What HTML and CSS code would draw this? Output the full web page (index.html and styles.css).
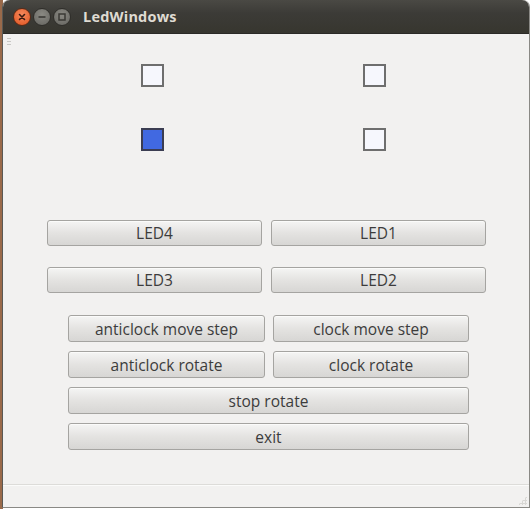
FILE: index.html
```html
<!DOCTYPE html>
<html>
<head>
<meta charset="utf-8">
<link rel="stylesheet" href="styles.css">
</head>
<body>
<div class="desk">
  <div class="window">
    <div class="titlebar">
      <div class="controls">
        <span class="wbtn close"><svg width="10" height="10" viewBox="0 0 10 10"><path d="M2.5 2.5 L7.5 7.5 M7.5 2.5 L2.5 7.5" stroke="#3a1a10" stroke-width="1.6" stroke-linecap="round"/></svg></span>
        <span class="wbtn"><svg width="10" height="10" viewBox="0 0 10 10"><path d="M1.5 5 H8.5" stroke="#3a3935" stroke-width="1.6"/></svg></span>
        <span class="wbtn"><svg width="10" height="10" viewBox="0 0 10 10"><rect x="2" y="2" width="6" height="6" fill="none" stroke="#3a3935" stroke-width="1.5"/></svg></span>
      </div>
      <div class="title">LedWindows</div>
    </div>
    <div class="content">
      <div class="menu-grip"></div>
      <div class="leds">
        <span class="led"></span><span class="led"></span>
        <span class="led on"></span><span class="led"></span>
      </div>
      <div class="grid1">
        <button class="btn">LED4</button>
        <button class="btn">LED1</button>
        <button class="btn">LED3</button>
        <button class="btn">LED2</button>
      </div>
      <div class="grid2">
        <button class="btn b2">anticlock move step</button>
        <button class="btn b2">clock move step</button>
        <button class="btn b2">anticlock rotate</button>
        <button class="btn b2">clock rotate</button>
        <button class="btn b2 wide">stop rotate</button>
        <button class="btn b2 wide">exit</button>
      </div>
    </div>
    <div class="status"><span class="grip"></span></div>
  </div>
</div>
</body>
</html>
```

FILE: styles.css
```css
html, body {
  margin: 0;
  padding: 0;
  width: 531px;
  height: 509px;
  overflow: hidden;
  background: #ffffff;
}
.desk {
  width: 531px;
  height: 509px;
  background: linear-gradient(90deg, #9a6a4a 0, #9a6a4a 3px, #ffffff 3px);
}
.window {
  margin-left: 2px;
  width: 526px;
  height: 507px;
  display: flex;
  flex-direction: column;
  background: #f2f1f0;
  border-right: 1px solid #8a8985;
  border-left: 1px solid #5a5955;
  border-bottom: 1px solid #8a8985;
  border-radius: 7px 7px 0 0;
  font-family: "Open Sans", "DejaVu Sans", sans-serif;
}
.titlebar {
  height: 34px;
  flex: none;
  display: flex;
  align-items: center;
  background: linear-gradient(#4a4944, #3c3b37 40%, #37362f);
  border-radius: 7px 7px 0 0;
  border-bottom: 1px solid #2b2a27;
  box-sizing: border-box;
}
.controls {
  display: flex;
  gap: 2px;
  margin-left: 10px;
}
.wbtn {
  width: 18px;
  height: 18px;
  border-radius: 50%;
  background: radial-gradient(circle at 50% 35%, #8a8983, #65645f);
  border: 1px solid #2f2e2a;
  display: flex;
  align-items: center;
  justify-content: center;
  box-sizing: border-box;
}
.wbtn.close {
  background: radial-gradient(circle at 50% 35%, #f58a5e, #e0531f);
  border-color: #5b2a16;
}
.title {
  margin-left: 12px;
  color: #dfdbd2;
  font-weight: bold;
  font-size: 14.5px;
  letter-spacing: 0.2px;
}
.content {
  flex: 1;
  position: relative;
  box-sizing: border-box;
  padding-top: 30px;
}
.menu-grip {
  position: absolute;
  left: 4px;
  top: 4px;
  width: 4px;
  height: 8px;
  background: repeating-linear-gradient(#c9c8c5 0 1px, transparent 1px 3px);
}
.leds {
  display: grid;
  grid-template-columns: 23px 23px;
  column-gap: 199px;
  row-gap: 41px;
  margin-left: 138px;
}
.led {
  width: 23px;
  height: 23px;
  box-sizing: border-box;
  border: 2px solid #6e6e6e;
  background: #f6f7fd;
}
.led.on {
  background: #4169e1;
  border-color: #3b3d52;
}
.grid1 {
  display: grid;
  grid-template-columns: 215px 215px;
  column-gap: 9px;
  row-gap: 21px;
  margin-left: 44px;
  margin-top: 69px;
}
.btn {
  height: 26px;
  box-sizing: border-box;
  border: 1px solid #a5a4a1;
  border-radius: 3px;
  background: linear-gradient(#f5f5f4, #e4e3e1 50%, #d7d6d4);
  box-shadow: inset 0 1px 0 #fbfbfa;
  font-family: "Open Sans", "DejaVu Sans", sans-serif;
  font-size: 15.5px;
  color: #3c3c3c;
  padding: 0;
  line-height: 22px;
}
.grid2 {
  display: grid;
  grid-template-columns: 197px 196px;
  column-gap: 8px;
  row-gap: 9px;
  margin-left: 65px;
  margin-top: 22px;
}
.b2 {
  height: 27px;
}
.wide {
  grid-column: 1 / 3;
}
.status {
  height: 22px;
  flex: none;
  border-top: 1px solid #dddcd9;
  box-shadow: inset 0 1px 0 #fbfbfa;
  position: relative;
}
.grip {
  position: absolute;
  right: 2px;
  bottom: 2px;
  width: 9px;
  height: 9px;
  background: radial-gradient(circle, #d8d7d4 1px, transparent 1.2px) 0 0 / 3px 3px;
  clip-path: polygon(100% 0, 100% 100%, 0 100%);
}
```
